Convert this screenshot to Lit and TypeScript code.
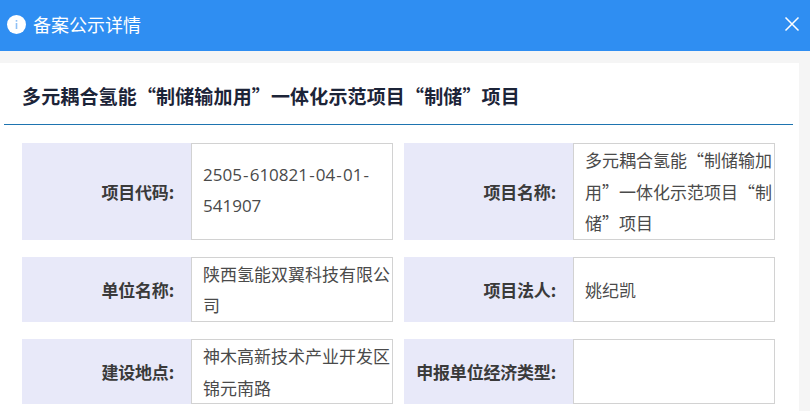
import { LitElement, html, css } from "lit";
import { customElement } from "lit/decorators.js";

const CODE = html`<span class="num">2505<i>-</i>610821<i>-</i>04<i>-</i>01<i>-</i>541907</span>`;

const ROWS: [string, unknown, string, string][] = [
  ["项目代码:", CODE, "项目名称:", "多元耦合氢能“制储输加用”一体化示范项目“制储”项目"],
  ["单位名称:", "陕西氢能双翼科技有限公司", "项目法人:", "姚纪凯"],
  ["建设地点:", "神木高新技术产业开发区锦元南路", "申报单位经济类型:", ""],
];

@customElement("app-root")
export class AppRoot extends LitElement {
  static styles = css`
    :host {
      display: block;
      width: 810px;
      height: 411px;
      overflow: hidden;
      background: #f5f5f5;
      font-family: "Noto Sans CJK SC", "Noto Sans", sans-serif;
    }
    .header {
      height: 51px;
      box-sizing: border-box;
      background: #2f8ef2;
      color: #fff;
      display: flex;
      align-items: center;
      padding: 0 10px 3px 7px;
      gap: 7px;
      font-size: 18px;
    }
    .header svg { display: block; flex: none; }
    .header .grow { flex: 1; }
    .card {
      margin: 12px 11px 0 0;
      background: #fff;
      height: 348px;
    }
    .title {
      margin: 0 6px 0 4px;
      padding: 3px 0 0 18px;
      height: 62px;
      box-sizing: border-box;
      display: flex;
      align-items: center;
      font-size: 19px;
      letter-spacing: 0.15px;
      font-weight: 700;
      color: #1c2438;
      border-bottom: 1px solid #1e74b0;
    }
    .grid {
      display: grid;
      grid-template-columns: 371px 371px;
      column-gap: 11px;
      row-gap: 17px;
      padding: 18px 0 0 22px;
    }
    .item {
      display: grid;
      grid-template-columns: 169px 202px;
    }
    .label {
      background: #e8e9f9;
      display: flex;
      align-items: center;
      justify-content: flex-end;
      padding-right: 17px;
      font-size: 17px;
      letter-spacing: -0.2px;
      font-weight: 700;
      color: #3a3a3a;
    }
    .value {
      box-sizing: border-box;
      border: 1px solid #d2d2d2;
      padding-left: 11px;
      display: flex;
      align-items: center;
      font-size: 17px;
      line-height: 31.6px;
      color: #4a4a4a;
      min-height: 65px;
    }
    .value > span { display: block; width: 100%; }
    .num {
      display: block;
      font-family: "Open Sans", sans-serif;
      padding: 0 14px 2px 0;
    }
    .num i { font-style: normal; margin: 0 1.15px; }
  `;

  render() {
    return html`
      <div class="header">
        <svg width="19" height="19" viewBox="0 0 19 19">
          <circle cx="9.5" cy="9.5" r="9.5" fill="#fff"></circle>
          <rect x="8.7" y="8" width="1.6" height="6" fill="#8fc0f6"></rect>
          <rect x="8.7" y="5" width="1.6" height="1.7" fill="#8fc0f6"></rect>
        </svg>
        <span>备案公示详情</span>
        <span class="grow"></span>
        <svg width="16" height="16" viewBox="0 0 16 16">
          <path d="M1.5 1.5 L14.5 14.5 M14.5 1.5 L1.5 14.5" stroke="#fff" stroke-width="1.5" fill="none"></path>
        </svg>
      </div>
      <div class="card">
        <div class="title">多元耦合氢能“制储输加用”一体化示范项目“制储”项目</div>
        <div class="grid">
          ${ROWS.map(
            ([a, b, c, d]) => html`
              <div class="item">
                <div class="label">${a}</div>
                <div class="value"><span>${b}</span></div>
              </div>
              <div class="item">
                <div class="label">${c}</div>
                <div class="value"><span>${d}</span></div>
              </div>
            `
          )}
        </div>
      </div>
    `;
  }
}
